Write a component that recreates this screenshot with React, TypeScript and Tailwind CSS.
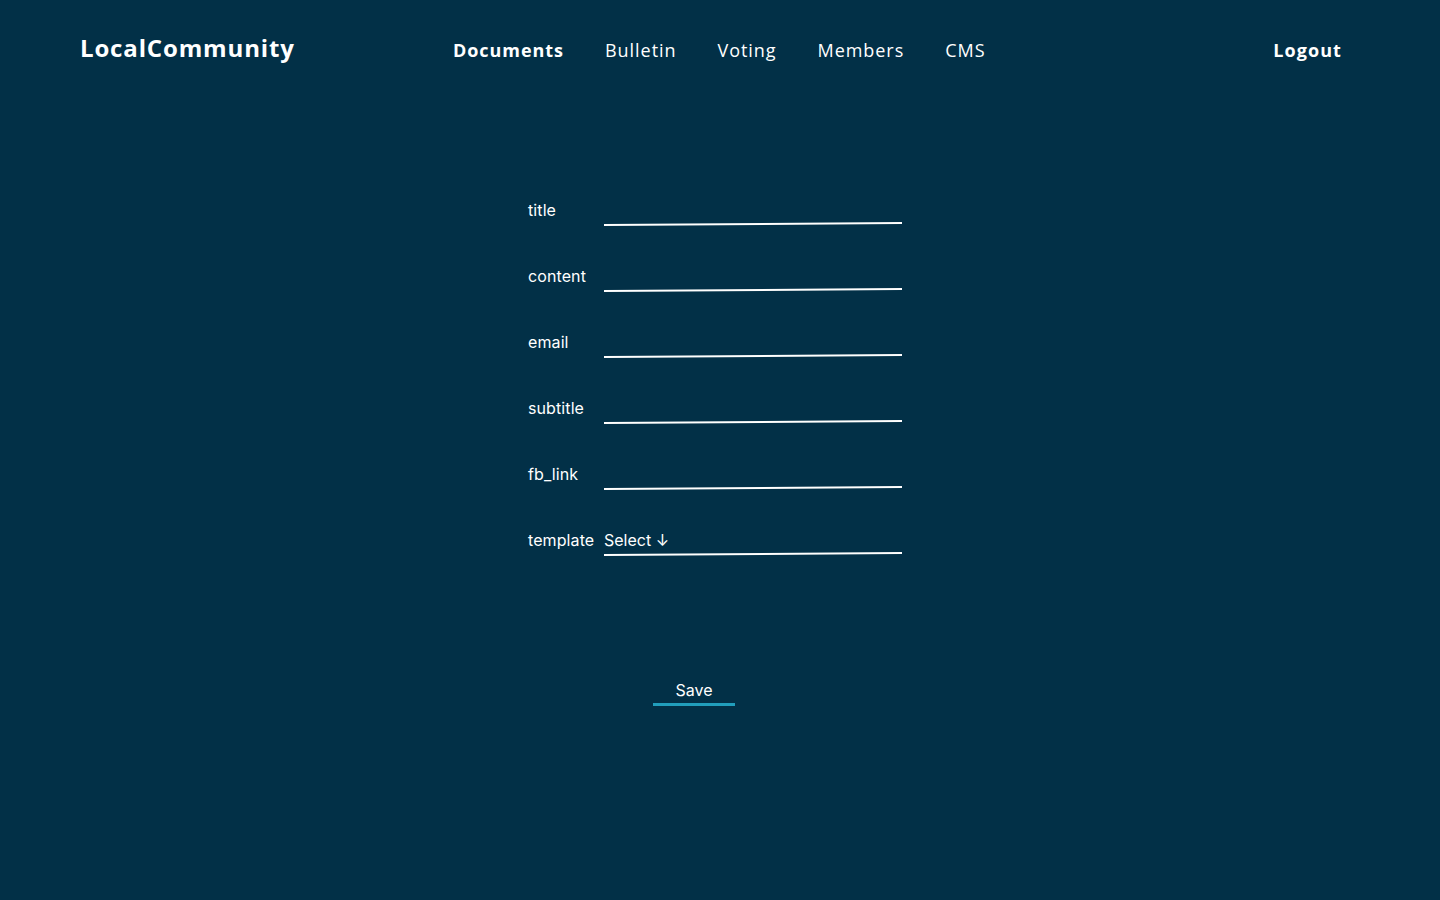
import React from "react";

const fields = ["title", "content", "email", "subtitle", "fb_link", "template"];

function Line() {
  return (
    <svg className="absolute left-0 bottom-0" width="298" height="4" viewBox="0 0 298 4">
      <line x1="0" y1="3" x2="298" y2="1" stroke="#ffffff" strokeWidth="2" />
    </svg>
  );
}

export default function App() {
  return (
    <div
      className="min-h-[900px] w-full bg-[#023047] text-white"
      style={{ fontFamily: "Inter, 'Noto Sans', sans-serif" }}
    >
      <header
        className="flex items-center h-[100px] pl-20 pr-[98px]"
        style={{ fontFamily: "'Open Sans', 'Noto Sans', sans-serif" }}
      >
        <div className="w-[373px] text-[24px] font-bold tracking-[0.85px] -mt-1">LocalCommunity</div>
        <nav className="flex items-center gap-[41px] text-[18px] tracking-[0.95px]">
          <span className="font-bold">Documents</span>
          <span>Bulletin</span>
          <span>Voting</span>
          <span>Members</span>
          <span>CMS</span>
        </nav>
        <div className="ml-auto text-[18px] font-bold tracking-[1.1px]">Logout</div>
      </header>

      <div className="pl-[528px] pt-[98px] flex flex-col gap-[38px]">
        {fields.map((f) => (
          <div key={f} className="flex h-[28px] items-start">
            <label className="w-[76px] text-[16px] leading-[24px] tracking-[0.1px]">{f}</label>
            <div className="relative w-[298px] h-[28px] text-[16px] leading-[24px]">
              {f === "template" && <span>Select ↓</span>}
              <Line />
            </div>
          </div>
        ))}
      </div>

      <div className="pl-[653px] pt-[122px]">
        <button className="w-[82px] text-[16px] leading-[20px] pb-[3px] border-b-[3px] border-[#219ebc] text-white">
          Save
        </button>
      </div>
    </div>
  );
}
